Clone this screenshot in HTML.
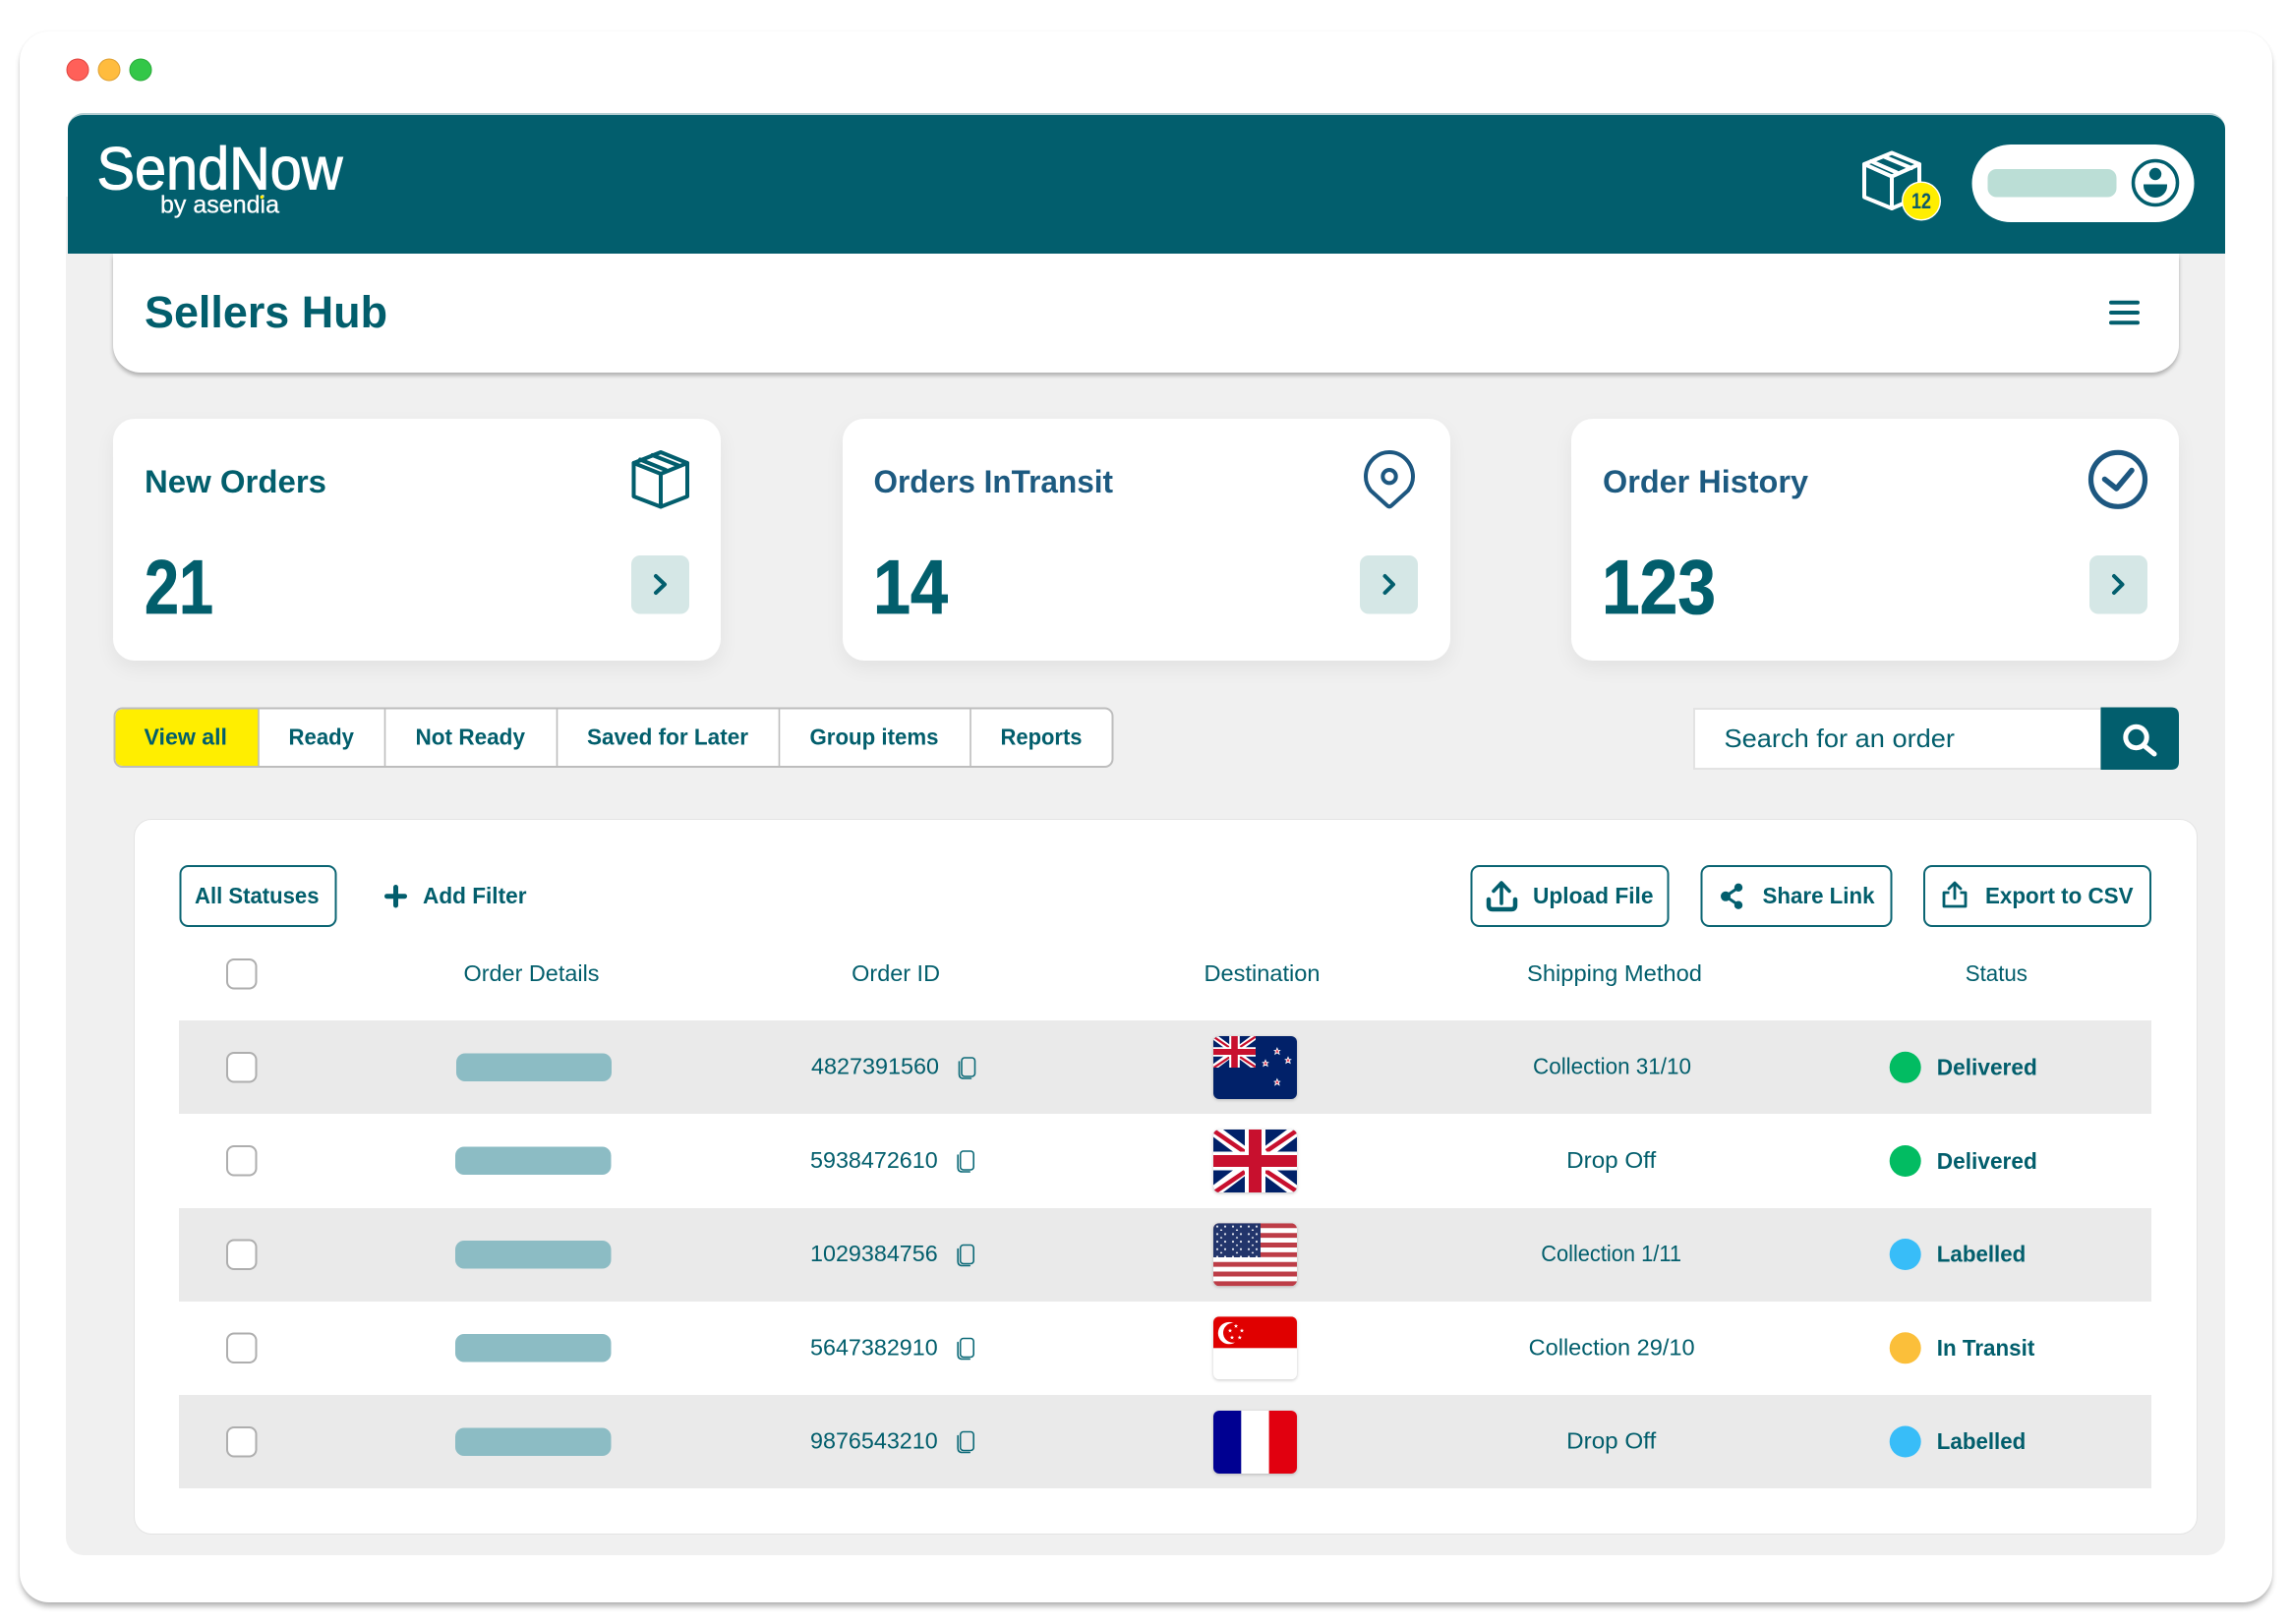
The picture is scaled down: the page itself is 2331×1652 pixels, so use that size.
<!DOCTYPE html>
<html lang="en"><head><meta charset="utf-8"><title>SendNow Sellers Hub</title>
<style>
html,body{margin:0;padding:0;background:#fff;width:2331px;height:1652px;overflow:hidden}
.b{position:absolute;box-sizing:border-box}
svg{position:absolute;left:0;top:0}
text{font-family:"Liberation Sans",sans-serif;fill:#025e6c}
.r{font-size:23px}
.h{font-size:23px;font-weight:700}
.t{font-size:32.5px;font-weight:700}
.n{font-size:78px;font-weight:700;stroke:#025e6c;stroke-width:.8}
</style></head><body>
<div class="b" style="left:20px;top:32px;width:2291px;height:1598px;background:#fff;border-radius:30px;box-shadow:0 5px 6px -1px rgba(0,0,0,.3),0 0 2px rgba(0,0,0,.07)"></div>
<div class="b" style="left:67px;top:200px;width:2196px;height:1382px;background:#f0f0f0;border-radius:0 0 18px 18px"></div>
<div class="b" style="left:68.5px;top:115px;width:2194px;height:143px;background:#025e6d;border-radius:16px 16px 0 0;border-top:2px solid #b3cdd1"></div>
<div class="b" style="left:115px;top:258px;width:2101px;height:121px;background:#fff;border-radius:0 0 28px 28px;box-shadow:0 3px 4px rgba(0,0,0,.28)"></div>
<div class="b" style="left:115px;top:426px;width:618px;height:246px;background:#fff;border-radius:22px;box-shadow:0 8px 20px rgba(0,0,0,.06)"></div>
<div class="b" style="left:857px;top:426px;width:618px;height:246px;background:#fff;border-radius:22px;box-shadow:0 8px 20px rgba(0,0,0,.06)"></div>
<div class="b" style="left:1598px;top:426px;width:618px;height:246px;background:#fff;border-radius:22px;box-shadow:0 8px 20px rgba(0,0,0,.06)"></div>
<div class="b" style="left:135.5px;top:833px;width:2099.5px;height:728px;background:#fff;border:1.5px solid #e4e4e4;border-radius:18px"></div>

<svg width="2331" height="1652" viewBox="0 0 2331 1652" xmlns="http://www.w3.org/2000/svg">
<defs>
<clipPath id="fc"><rect width="85" height="64" rx="6"/></clipPath>
<clipPath id="cant"><rect width="43" height="32"/></clipPath>
<g id="uj">
<rect width="85" height="64" fill="#012169"/>
<path d="M0 0L85 64M85 0L0 64" stroke="#fff" stroke-width="12"/>
<path d="M0 1L32 23M85 1L54 22M1 64L32 43M53 42L85 63" stroke="#c8102e" stroke-width="4.5"/>
<rect x="32" width="21" height="64" fill="#fff"/><rect y="22.5" width="85" height="19" fill="#fff"/>
<rect x="36" width="13" height="64" fill="#c8102e"/><rect y="26" width="85" height="12" fill="#c8102e"/>
</g>
<g id="st"><path d="M0-3.4L.95-1.1 3.3-1 1.5-.4 2.1 2.8 0 1.3-2.1 2.8-1.5-.4-3.3-1-.95-1.1Z" fill="#e3425a" stroke="#fff" stroke-width=".8"/></g>
<path id="ws" d="M0-2.2L.6-.7 2.2-.7 .9.3 1.4 1.9 0 .9-1.4 1.9-.9.3-2.2-.7-.6-.7Z" fill="#fff"/>
<pattern id="usst" width="16" height="7.7" patternUnits="userSpaceOnUse"><circle cx="4" cy="3.4" r="1.1" fill="#e9ebf2"/><circle cx="12" cy="3.4" r="1.1" fill="#e9ebf2"/><circle cx="8" cy="7.25" r="1.1" fill="#e9ebf2"/></pattern>
<g id="cp" fill="none" stroke="#0d6a78" stroke-width="1.6" stroke-linecap="round"><rect x="3.5" y="1" width="13.5" height="19" rx="3"/><path d="M1 5V17.5Q1 22 5.5 22H13"/></g>
<g id="cb"><rect x="1" y="1" width="29.5" height="29.5" rx="7" fill="#fff" stroke="#aeaeae" stroke-width="2"/></g>
</defs>

<!-- traffic lights -->
<circle cx="79" cy="71" r="11" fill="#ff6059" stroke="#e0443e" stroke-width="1"/>
<circle cx="111" cy="71" r="11" fill="#ffbc3e" stroke="#dea034" stroke-width="1"/>
<circle cx="143" cy="71" r="11" fill="#33c748" stroke="#2aac3a" stroke-width="1"/>

<!-- logo -->
<text x="98.5" y="192.5" font-size="61" textLength="250" lengthAdjust="spacingAndGlyphs" style="fill:#fff;stroke:#fff;stroke-width:1">SendNow</text>
<text x="163" y="216.5" font-size="25" textLength="121" lengthAdjust="spacingAndGlyphs" style="fill:#fff;stroke:#fff;stroke-width:.3">by asendia</text>
<circle cx="266.3" cy="200.5" r="1.7" fill="#ffee00"/>

<!-- header right -->
<g fill="none" stroke="#fff" stroke-width="4" stroke-linejoin="round" stroke-linecap="round">
<path d="M1924 155.5L1952 167V200L1924 212L1896 200.5V167Z"/>
<path d="M1896 167L1924 179.5L1952 167M1924 179.5V212M1903 164L1929 175.5M1916.5 159.5L1944 171"/>
</g>
<circle cx="1954" cy="204.5" r="19.3" fill="#ffee00" stroke="#fff" stroke-width="1.4"/>
<text x="1944" y="212" font-size="22" font-weight="700" textLength="20" lengthAdjust="spacingAndGlyphs" style="fill:#0d5a6a">12</text>
<rect x="2005.5" y="147" width="226" height="79" rx="39.5" fill="#fff"/>
<rect x="2021.5" y="172" width="131" height="28.5" rx="9" fill="#bbded6"/>
<circle cx="2192" cy="186" r="22.5" fill="none" stroke="#025e6d" stroke-width="3.5"/>
<circle cx="2192" cy="177" r="6.2" fill="#025e6d"/>
<path d="M2180 187.5H2204V189A12 12 0 0 1 2180 189Z" fill="#025e6d"/>

<!-- title bar -->
<text x="147" y="333" font-size="45" font-weight="700" textLength="247" lengthAdjust="spacingAndGlyphs">Sellers Hub</text>
<path d="M2147 307.8H2174M2147 318H2174M2147 328.2H2174" stroke="#025e6d" stroke-width="4" stroke-linecap="round"/>

<!-- stat cards -->
<text class="t" x="147" y="501" textLength="185" lengthAdjust="spacingAndGlyphs">New Orders</text>
<text class="n" x="147" y="624" textLength="70" lengthAdjust="spacingAndGlyphs">21</text>
<g fill="none" stroke="#025e6d" stroke-width="4" stroke-linejoin="round" stroke-linecap="round">
<path d="M672 460L699 471V505L672 515.5L644.5 505V471Z"/>
<path d="M644.5 471L672 482L699 471M672 482V515.5M651 467.5L677 478M663.5 463L690 473.5"/>
</g>
<rect x="642" y="565" width="59" height="59.5" rx="9" fill="#d5e7e6"/>
<path d="M667 586L676 594.5L667 603" fill="none" stroke="#025e6d" stroke-width="4" stroke-linecap="round" stroke-linejoin="round"/>

<text class="t" x="888.5" y="501" textLength="243.5" lengthAdjust="spacingAndGlyphs" style="fill:#1d5a80">Orders InTransit</text>
<text class="n" x="888" y="624" textLength="76" lengthAdjust="spacingAndGlyphs">14</text>
<path d="M1413 460C1400 460 1389 471 1389 485C1389 491 1391 495 1394 499L1410.5 514Q1413 516.5 1415.5 514L1432 499C1435 495 1437 491 1437 485C1437 471 1426 460 1413 460Z" fill="none" stroke="#1d5780" stroke-width="4" stroke-linejoin="round"/>
<circle cx="1413" cy="484.7" r="6.7" fill="none" stroke="#1d5780" stroke-width="4"/>
<rect x="1383" y="565" width="59" height="59.5" rx="9" fill="#d5e7e6"/>
<path d="M1408.5 586L1417 594.5L1408.5 603" fill="none" stroke="#025e6d" stroke-width="4" stroke-linecap="round" stroke-linejoin="round"/>

<text class="t" x="1630" y="501" textLength="209" lengthAdjust="spacingAndGlyphs" style="fill:#1d5a80">Order History</text>
<text class="n" x="1629" y="624" textLength="116" lengthAdjust="spacingAndGlyphs">123</text>
<circle cx="2154" cy="487.8" r="27.5" fill="none" stroke="#1d5780" stroke-width="5.2"/>
<path d="M2140.5 487.5L2152.5 497L2168 478.5" fill="none" stroke="#1d5780" stroke-width="5.5" stroke-linecap="round" stroke-linejoin="round"/>
<rect x="2125" y="565" width="59" height="59.5" rx="9" fill="#d5e7e6"/>
<path d="M2150 586L2158.5 594.5L2150 603" fill="none" stroke="#025e6d" stroke-width="4" stroke-linecap="round" stroke-linejoin="round"/>

<!-- tabs -->
<rect x="116.5" y="720.5" width="1015" height="59.5" rx="8" fill="#fff" stroke="#bdbdbd" stroke-width="2"/>
<path d="M263 721.5H125.5Q117.5 721.5 117.5 729.5V771Q117.5 779 125.5 779H263Z" fill="#ffee00"/>
<path d="M263 721V779M391.5 721V779M566.5 721V779M792.5 721V779M987 721V779" stroke="#bdbdbd" stroke-width="1.6"/>
<text class="h" x="146.5" y="757.5" textLength="84.5" lengthAdjust="spacingAndGlyphs">View all</text>
<text class="h" x="293.5" y="757.5" textLength="66.5" lengthAdjust="spacingAndGlyphs">Ready</text>
<text class="h" x="422.5" y="757.5" textLength="111.5" lengthAdjust="spacingAndGlyphs">Not Ready</text>
<text class="h" x="597" y="757.5" textLength="164" lengthAdjust="spacingAndGlyphs">Saved for Later</text>
<text class="h" x="823.5" y="757.5" textLength="131" lengthAdjust="spacingAndGlyphs">Group items</text>
<text class="h" x="1017.5" y="757.5" textLength="83" lengthAdjust="spacingAndGlyphs">Reports</text>

<!-- search -->
<rect x="1723" y="721" width="414" height="61" fill="#fff" stroke="#e3e3e3" stroke-width="2"/>
<path d="M2136.5 719.5H2208Q2216 719.5 2216 727.5V775Q2216 783 2208 783H2136.5Z" fill="#025e6d"/>
<text x="1753.5" y="760" font-size="26" textLength="234.5" lengthAdjust="spacingAndGlyphs">Search for an order</text>
<circle cx="2172.5" cy="750" r="10.7" fill="none" stroke="#fff" stroke-width="5"/>
<path d="M2180.5 758.5L2191 767" stroke="#fff" stroke-width="5" stroke-linecap="round"/>

<!-- toolbar -->
<g fill="#fff" stroke="#0b6573" stroke-width="2">
<rect x="183.5" y="881" width="158" height="61" rx="8"/>
<rect x="1496.5" y="881" width="200" height="61" rx="8"/>
<rect x="1730.5" y="881" width="193" height="61" rx="8"/>
<rect x="1957" y="881" width="230" height="61" rx="8"/>
</g>
<text class="h" x="198" y="919" textLength="126.5" lengthAdjust="spacingAndGlyphs">All Statuses</text>
<path d="M402.5 902.5V921M393.5 911.7H411.5" stroke="#025e6d" stroke-width="5" stroke-linecap="round"/>
<text class="h" x="430" y="919" textLength="105.5" lengthAdjust="spacingAndGlyphs">Add Filter</text>
<path d="M1527 899V919M1519 906.5L1527 898L1535 906.5" fill="none" stroke="#025e6d" stroke-width="3.6" stroke-linecap="round" stroke-linejoin="round"/>
<path d="M1514 915V921Q1514 925 1518 925H1537Q1541 925 1541 921V915" fill="none" stroke="#025e6d" stroke-width="4.5" stroke-linecap="round"/>
<text class="h" x="1559" y="919" textLength="122.5" lengthAdjust="spacingAndGlyphs">Upload File</text>
<path d="M1768.5 902.5L1755 911.8L1768.5 921" fill="none" stroke="#025e6d" stroke-width="3"/>
<circle cx="1768" cy="902.8" r="4.2" fill="#025e6d"/><circle cx="1755" cy="911.8" r="5" fill="#025e6d"/><circle cx="1768" cy="920.7" r="4.2" fill="#025e6d"/>
<text class="h" x="1792.5" y="919" textLength="114" lengthAdjust="spacingAndGlyphs">Share Link</text>
<path d="M1988 899V914M1982 904L1988 898L1994 904" fill="none" stroke="#025e6d" stroke-width="2.8" stroke-linecap="round" stroke-linejoin="round"/>
<path d="M1982.5 908H1977V922H1999V908H1993.5" fill="none" stroke="#025e6d" stroke-width="2.8" stroke-linejoin="round"/>
<text class="h" x="2019" y="919" textLength="150.5" lengthAdjust="spacingAndGlyphs">Export to CSV</text>

<!-- table header -->
<use href="#cb" x="230" y="975"/>
<text class="r" x="471.5" y="998" textLength="138" lengthAdjust="spacingAndGlyphs">Order Details</text>
<text class="r" x="866.2" y="998" textLength="89.8" lengthAdjust="spacingAndGlyphs">Order ID</text>
<text class="r" x="1224.5" y="998" textLength="118" lengthAdjust="spacingAndGlyphs">Destination</text>
<text class="r" x="1553" y="998" textLength="178" lengthAdjust="spacingAndGlyphs">Shipping Method</text>
<text class="r" x="1998.7" y="998" textLength="63.3" lengthAdjust="spacingAndGlyphs">Status</text>

<!-- rows -->
<rect x="182" y="1038" width="2006" height="95" fill="#eaeaea"/>
<rect x="182" y="1229" width="2006" height="95" fill="#eaeaea"/>
<rect x="182" y="1419" width="2006" height="95" fill="#eaeaea"/>

<g fill="#8cbcc4">
<rect x="464" y="1071.5" width="158" height="28.5" rx="9"/>
<rect x="463" y="1166.5" width="158.5" height="28.5" rx="9"/>
<rect x="463" y="1262" width="158.5" height="28.5" rx="9"/>
<rect x="463" y="1357" width="158.5" height="28.5" rx="9"/>
<rect x="463" y="1452.5" width="158.5" height="28.5" rx="9"/>
</g>
<use href="#cb" x="230" y="1070"/><use href="#cb" x="230" y="1165"/><use href="#cb" x="230" y="1260.5"/><use href="#cb" x="230" y="1355.5"/><use href="#cb" x="230" y="1451"/>

<text class="r" x="825" y="1092.7" textLength="130" lengthAdjust="spacingAndGlyphs">4827391560</text>
<text class="r" x="824" y="1187.8" textLength="129.7" lengthAdjust="spacingAndGlyphs">5938472610</text>
<text class="r" x="824" y="1283" textLength="129.7" lengthAdjust="spacingAndGlyphs">1029384756</text>
<text class="r" x="824" y="1378.3" textLength="129.7" lengthAdjust="spacingAndGlyphs">5647382910</text>
<text class="r" x="824" y="1473.4" textLength="129.7" lengthAdjust="spacingAndGlyphs">9876543210</text>
<use href="#cp" x="974.5" y="1075"/><use href="#cp" x="973.2" y="1170"/><use href="#cp" x="973.2" y="1265.5"/><use href="#cp" x="973.2" y="1360.5"/><use href="#cp" x="973.2" y="1455.5"/>

<!-- flags -->
<g style="filter:drop-shadow(0 1px 1.5px rgba(0,0,0,.22))">
<g transform="translate(1234,1054)"><g clip-path="url(#fc)">
<rect width="85" height="64" fill="#012169"/>
<g clip-path="url(#cant)"><use href="#uj" transform="scale(.506,.5)"/></g>
<use href="#st" x="64.9" y="15.5"/><use href="#st" x="76" y="24.7"/><use href="#st" x="53" y="27.7"/><use href="#st" x="64.9" y="47"/>
</g></g>
<g transform="translate(1234,1149)"><g clip-path="url(#fc)"><use href="#uj"/></g></g>
<g transform="translate(1234,1244.3)"><g clip-path="url(#fc)">
<rect width="85" height="64" fill="#fff"/>
<path d="M0 2.5H85M0 12.4H85M0 22.2H85M0 32H85M0 41.9H85M0 51.7H85M0 61.5H85" stroke="#bd3d47" stroke-width="4.9"/>
<rect width="48" height="34.7" fill="#22356b"/><rect width="48" height="34.7" fill="url(#usst)"/>
</g></g>
<g transform="translate(1234,1339.3)"><g clip-path="url(#fc)">
<rect width="85" height="64" fill="#fff"/><rect width="85" height="32" fill="#e00000"/>
<circle cx="16" cy="16.8" r="11.2" fill="#fff"/><circle cx="20" cy="16.5" r="10" fill="#e00000"/>
<use href="#ws" x="23" y="9.7"/><use href="#ws" x="29" y="14.3"/><use href="#ws" x="17" y="14.3"/><use href="#ws" x="19" y="21.3"/><use href="#ws" x="26.8" y="21.3"/>
</g></g>
<g transform="translate(1234,1435)"><g clip-path="url(#fc)">
<rect width="85" height="64" fill="#fff"/><rect width="28.3" height="64" fill="#000091"/><rect x="56.6" width="28.4" height="64" fill="#e1000f"/>
</g></g>
</g>

<text class="r" x="1559" y="1092.7" textLength="161" lengthAdjust="spacingAndGlyphs">Collection 31/10</text>
<text class="r" x="1593.2" y="1187.8" textLength="91" lengthAdjust="spacingAndGlyphs">Drop Off</text>
<text class="r" x="1567.2" y="1283" textLength="142.8" lengthAdjust="spacingAndGlyphs">Collection 1/11</text>
<text class="r" x="1554.6" y="1378.3" textLength="169" lengthAdjust="spacingAndGlyphs">Collection 29/10</text>
<text class="r" x="1593.2" y="1473.4" textLength="91" lengthAdjust="spacingAndGlyphs">Drop Off</text>

<circle cx="1937.7" cy="1085.8" r="16" fill="#02bc62"/>
<circle cx="1937.7" cy="1181" r="16" fill="#02bc62"/>
<circle cx="1937.7" cy="1276" r="16" fill="#38bdf8"/>
<circle cx="1937.7" cy="1371.3" r="16" fill="#fbbf3a"/>
<circle cx="1937.7" cy="1466.5" r="16" fill="#38bdf8"/>
<text class="h" x="1969.8" y="1093.7" textLength="102" lengthAdjust="spacingAndGlyphs">Delivered</text>
<text class="h" x="1969.8" y="1188.8" textLength="102" lengthAdjust="spacingAndGlyphs">Delivered</text>
<text class="h" x="1969.8" y="1283.5" textLength="90.5" lengthAdjust="spacingAndGlyphs">Labelled</text>
<text class="h" x="1969.8" y="1378.8" textLength="99.5" lengthAdjust="spacingAndGlyphs">In Transit</text>
<text class="h" x="1969.8" y="1473.9" textLength="90.5" lengthAdjust="spacingAndGlyphs">Labelled</text>
</svg>
</body></html>
